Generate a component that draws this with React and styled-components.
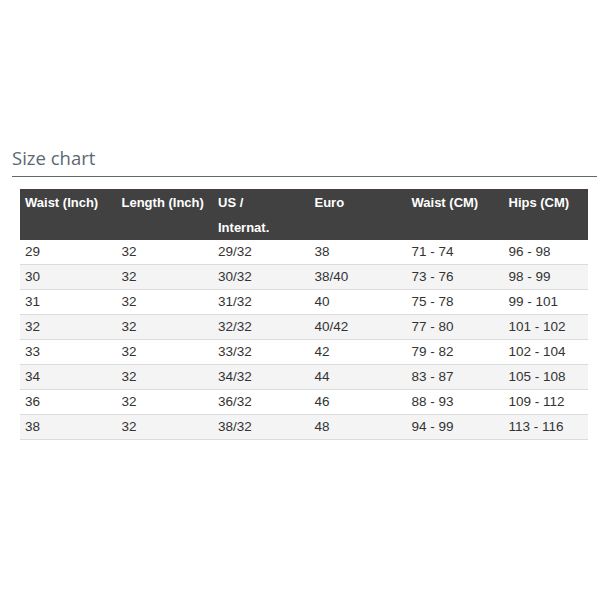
import React from "react"
import styled, { createGlobalStyle } from "styled-components"

const GlobalStyle = createGlobalStyle`
  body {
    margin: 0;
    background: #fff;
    font-family: "Liberation Sans", Arial, sans-serif;
  }
`

const Page = styled.div`
  width: 600px;
  height: 600px;
  padding-top: 145px;
  box-sizing: border-box;
`

const Title = styled.h2`
  margin: 0 3px 0 12px;
  padding-bottom: 5px;
  font-family: "Open Sans", "Liberation Sans", sans-serif;
  font-weight: 400;
  font-size: 18.5px;
  line-height: 26px;
  color: #5d6870;
  border-bottom: 1.5px solid #5f6a70;
`

const Table = styled.table`
  margin: 12px 0 0 20px;
  width: 568px;
  border-collapse: collapse;
  table-layout: fixed;
  font-size: 13.5px;
  color: #333;
`

const HeadCell = styled.th`
  background: #414141;
  color: #fff;
  font-size: 13px;
  font-weight: 700;
  text-align: left;
  vertical-align: top;
  padding: 1px 5px 0;
  height: 50px;
  line-height: 25px;
  width: ${({ w }) => w}px;
  box-sizing: border-box;
`

const Row = styled.tr`
  background: ${({ striped }) => (striped ? "#f4f4f5" : "#fff")};
  border-bottom: 1px solid #dcdcdc;
`

const Cell = styled.td`
  padding: 0 5px;
  height: 24px;
  line-height: 24px;
`

const columns = [
  { label: ["Waist (Inch)"], w: 96.5 },
  { label: ["Length (Inch)"], w: 96.5 },
  { label: ["US /", "Internat."], w: 96.5 },
  { label: ["Euro"], w: 97 },
  { label: ["Waist (CM)"], w: 97 },
  { label: ["Hips (CM)"], w: 84.5 },
]

const rows = [
  ["29", "32", "29/32", "38", "71 - 74", "96 - 98"],
  ["30", "32", "30/32", "38/40", "73 - 76", "98 - 99"],
  ["31", "32", "31/32", "40", "75 - 78", "99 - 101"],
  ["32", "32", "32/32", "40/42", "77 - 80", "101 - 102"],
  ["33", "32", "33/32", "42", "79 - 82", "102 - 104"],
  ["34", "32", "34/32", "44", "83 - 87", "105 - 108"],
  ["36", "32", "36/32", "46", "88 - 93", "109 - 112"],
  ["38", "32", "38/32", "48", "94 - 99", "113 - 116"],
]

export default function App() {
  return (
    <Page>
      <GlobalStyle />
      <Title>Size chart</Title>
      <Table>
        <thead>
          <tr>
            {columns.map((c) => (
              <HeadCell key={c.label[0]} w={c.w}>
                {c.label.map((l, i) => (
                  <React.Fragment key={l}>
                    {i > 0 && <br />}
                    {l}
                  </React.Fragment>
                ))}
              </HeadCell>
            ))}
          </tr>
        </thead>
        <tbody>
          {rows.map((r, i) => (
            <Row key={r[0]} striped={i % 2 === 1}>
              {r.map((v, j) => (
                <Cell key={j}>{v}</Cell>
              ))}
            </Row>
          ))}
        </tbody>
      </Table>
    </Page>
  )
}
